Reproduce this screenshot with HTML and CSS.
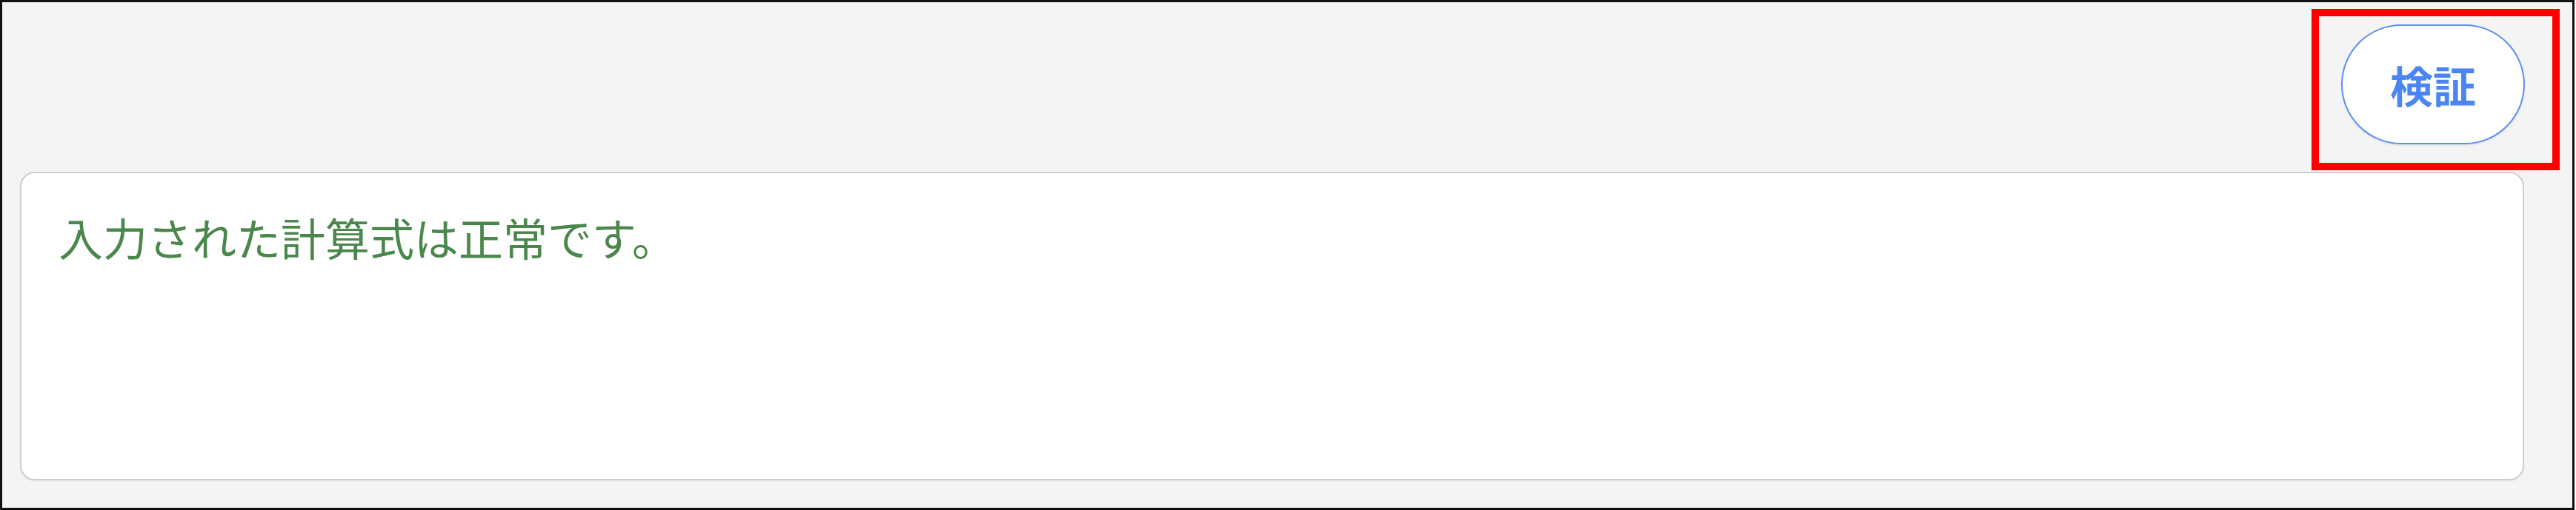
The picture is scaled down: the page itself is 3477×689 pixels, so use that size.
FILE: index.html
```html
<!DOCTYPE html>
<html lang="ja">
<head>
<meta charset="utf-8">
<title>検証</title>
<link rel="stylesheet" href="styles.css">
</head>
<body>
<div class="frame">
  <div class="toolbar">
    <span class="btn-wrap">
      <button class="verify-btn" type="button">検証</button>
      <span class="highlight"></span>
    </span>
  </div>
  <div class="result-box">
    <p class="result-text">入力された計算式は正常です。</p>
  </div>
</div>
</body>
</html>
```

FILE: styles.css
```css
html, body {
  margin: 0;
  padding: 0;
  background: #ffffff;
}

.frame {
  box-sizing: border-box;
  width: 3475px;
  height: 689px;
  border: 3px solid #111111;
  background: #f4f4f4;
  display: flex;
  flex-direction: column;
  padding: 30px 65px 37px 24px;
  font-family: "Noto Sans CJK JP", "Noto Sans", sans-serif;
}

.toolbar {
  display: flex;
  justify-content: flex-end;
  height: 162px;
  flex: 0 0 auto;
}

.btn-wrap {
  position: relative;
  display: inline-block;
  margin-right: -1px;
}

.verify-btn {
  box-sizing: border-box;
  width: 248px;
  height: 162px;
  border: 2px solid #5b8ff5;
  border-radius: 81px;
  background: #ffffff;
  color: #4a86f3;
  font-family: "Noto Sans CJK JP", "Noto Sans", sans-serif;
  font-size: 58px;
  font-weight: 700;
  padding: 0;
  box-shadow: 0 2px 3px rgba(0, 0, 0, 0.06);
}

.highlight {
  position: absolute;
  left: -40px;
  top: -21px;
  right: -47px;
  bottom: -35px;
  border: 10px solid #ff0000;
}

.result-box {
  box-sizing: border-box;
  margin-top: 37px;
  flex: 1 1 auto;
  background: #ffffff;
  border: 2px solid #cfcfcf;
  border-radius: 20px;
  padding: 44px 50px 36px;
  box-shadow: 0 1px 2px rgba(0, 0, 0, 0.06);
}

.result-text {
  margin: 0;
  color: #4a874a;
  font-size: 60px;
  line-height: 84px;
}
```
